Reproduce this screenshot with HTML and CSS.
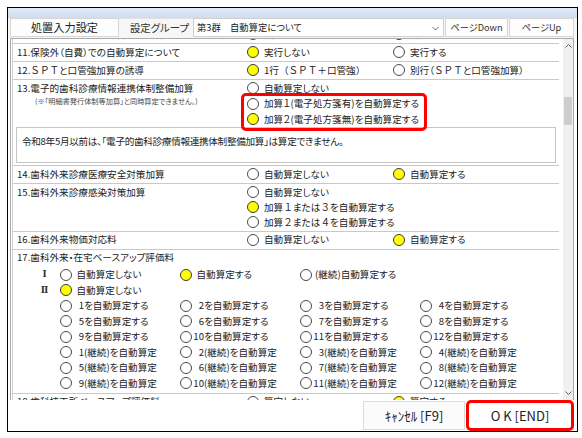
FILE: index.html
```html
<!DOCTYPE html>
<html lang="ja">
<head>
<meta charset="utf-8">
<title>処置入力設定</title>
<link rel="stylesheet" href="styles.css">
</head>
<body>
<div class="window">
  <div class="titlebar"></div>

  <div class="toolbar">
    <button class="tb-btn tb-main">処置入力設定</button>
    <div class="tb-label">設定グループ</div>
    <div class="combo">
      <span class="combo-text">第3群　自動算定について</span>
      <svg class="combo-arrow" width="7" height="5" viewBox="0 0 7 5"><path d="M0.5 1 L3.5 4 L6.5 1" fill="none" stroke="#6a6a6a" stroke-width="1"/></svg>
    </div>
    <button class="tb-btn tb-down">ページDown</button>
    <button class="tb-btn tb-up">ページUp</button>
  </div>

  <div class="panel">
    <div class="viewport">
      <div class="list">

        <div class="row">
          <div class="label">10.歯科疾患管理料の文書提供加算</div>
          <label class="opt"><span class="radio"></span>実行しない</label>
          <label class="opt"><span class="radio on"></span>実行する</label>
        </div>

        <div class="row">
          <div class="label">11.保険外（自費）での自動算定について</div>
          <label class="opt"><span class="radio on"></span>実行しない</label>
          <label class="opt"><span class="radio"></span>実行する</label>
        </div>

        <div class="row">
          <div class="label">12.<span class="fw">ＳＰＴ</span>と口管強加算の誘導</div>
          <label class="opt"><span class="radio on"></span><span class="fw">1行（ＳＰＴ＋口管強）</span></label>
          <label class="opt"><span class="radio"></span>別行（<span class="fw">ＳＰＴ</span>と口管強加算）</label>
        </div>

        <div class="row">
          <div class="label">13.電子的歯科診療情報連携体制整備加算
            <div class="sub">(※「明細書発行体制等加算」と同時算定できません。)</div>
          </div>
          <div class="stack">
            <label class="opt"><span class="radio"></span>自動算定しない</label>
            <div class="mark">
              <label class="opt"><span class="radio"></span>加算１(電子処方箋有)を自動算定する</label>
              <label class="opt"><span class="radio on"></span>加算２(電子処方箋無)を自動算定する</label>
            </div>
          </div>
          <div class="notice">令和8年5月以前は、「電子的歯科診療情報連携体制整備加算」は算定できません。</div>
        </div>

        <div class="row">
          <div class="label">14.歯科外来診療医療安全対策加算</div>
          <label class="opt"><span class="radio"></span>自動算定しない</label>
          <label class="opt"><span class="radio on"></span>自動算定する</label>
        </div>

        <div class="row">
          <div class="label">15.歯科外来診療感染対策加算</div>
          <div class="stack tight">
            <label class="opt"><span class="radio"></span>自動算定しない</label>
            <label class="opt"><span class="radio on"></span>加算<span class="fw">１</span>または<span class="fw">３</span>を自動算定する</label>
            <label class="opt"><span class="radio"></span>加算<span class="fw">２</span>または<span class="fw">４</span>を自動算定する</label>
          </div>
        </div>

        <div class="row">
          <div class="label">16.歯科外来物価対応料</div>
          <label class="opt"><span class="radio"></span>自動算定しない</label>
          <label class="opt"><span class="radio on"></span>自動算定する</label>
        </div>

        <div class="row base">
          <div class="label">17.歯科外来・在宅ベースアップ評価料</div>
          <div class="eval">
            <span class="roman">Ⅰ</span>
            <label class="opt"><span class="radio"></span>自動算定しない</label>
            <label class="opt"><span class="radio on"></span>自動算定する</label>
            <label class="opt k"><span class="radio"></span>(継続)自動算定する</label>
            <span></span>

            <span class="roman">Ⅱ</span>
            <label class="opt"><span class="radio on"></span>自動算定しない</label>
            <span></span><span></span><span></span>

            <label class="opt n c2"><span class="radio"></span><span class="num">1</span>を自動算定する</label>
            <label class="opt n"><span class="radio"></span><span class="num">2</span>を自動算定する</label>
            <label class="opt n"><span class="radio"></span><span class="num">3</span>を自動算定する</label>
            <label class="opt n"><span class="radio"></span><span class="num">4</span>を自動算定する</label>

            <label class="opt n c2"><span class="radio"></span><span class="num">5</span>を自動算定する</label>
            <label class="opt n"><span class="radio"></span><span class="num">6</span>を自動算定する</label>
            <label class="opt n"><span class="radio"></span><span class="num">7</span>を自動算定する</label>
            <label class="opt n"><span class="radio"></span><span class="num">8</span>を自動算定する</label>

            <label class="opt n c2"><span class="radio"></span><span class="num">9</span>を自動算定する</label>
            <label class="opt n"><span class="radio"></span><span class="num">10</span>を自動算定する</label>
            <label class="opt n"><span class="radio"></span><span class="num">11</span>を自動算定する</label>
            <label class="opt n"><span class="radio"></span><span class="num">12</span>を自動算定する</label>

            <label class="opt n c2"><span class="radio"></span><span class="num">1</span>(継続)を自動算定</label>
            <label class="opt n"><span class="radio"></span><span class="num">2</span>(継続)を自動算定</label>
            <label class="opt n"><span class="radio"></span><span class="num">3</span>(継続)を自動算定</label>
            <label class="opt n"><span class="radio"></span><span class="num">4</span>(継続)を自動算定</label>

            <label class="opt n c2"><span class="radio"></span><span class="num">5</span>(継続)を自動算定</label>
            <label class="opt n"><span class="radio"></span><span class="num">6</span>(継続)を自動算定</label>
            <label class="opt n"><span class="radio"></span><span class="num">7</span>(継続)を自動算定</label>
            <label class="opt n"><span class="radio"></span><span class="num">8</span>(継続)を自動算定</label>

            <label class="opt n c2"><span class="radio"></span><span class="num">9</span>(継続)を自動算定</label>
            <label class="opt n"><span class="radio"></span><span class="num">10</span>(継続)を自動算定</label>
            <label class="opt n"><span class="radio"></span><span class="num">11</span>(継続)を自動算定</label>
            <label class="opt n"><span class="radio"></span><span class="num">12</span>(継続)を自動算定</label>
          </div>
        </div>

        <div class="row">
          <div class="label">18.歯科技工所ベースアップ評価料</div>
          <label class="opt"><span class="radio"></span>算定しない</label>
          <label class="opt"><span class="radio on"></span>算定する</label>
        </div>

      </div>
    </div>

    <div class="scrollbar">
      <div class="sb-btn"><svg width="7" height="4" viewBox="0 0 7 4"><path d="M0.5 3.5 L3.5 0.5 L6.5 3.5" fill="none" stroke="#606060" stroke-width="1"/></svg></div>
      <div class="sb-track"><div class="sb-thumb"></div></div>
      <div class="sb-btn"><svg width="7" height="4" viewBox="0 0 7 4"><path d="M0.5 0.5 L3.5 3.5 L6.5 0.5" fill="none" stroke="#606060" stroke-width="1"/></svg></div>
    </div>
  </div>

  <div class="footer">
    <button class="ft-btn cancel">ｷｬﾝｾﾙ [F9]</button>
    <button class="ft-btn ok">O K [END]</button>
  </div>
</div>
</body>
</html>
```

FILE: styles.css
```css
* {
  box-sizing: border-box;
}

html,
body {
  margin: 0;
  background: #fff;
}

body {
  font-family: "Noto Sans CJK JP", "Noto Sans", sans-serif;
  font-size: 9.6px;
  color: #222;
  font-feature-settings: "palt";
}

button {
  font: inherit;
  color: inherit;
  padding: 0;
  cursor: default;
}

/* full-width letters and digits keep their full cell */
.fw {
  font-feature-settings: normal;
}

/* dialog frame */
.window {
  margin: 7px 0 0 7px;
  width: 571px;
  height: 425px;
  border: 1px solid #000;
  display: flex;
  flex-direction: column;
  background: #fff;
}

.titlebar {
  flex: none;
  height: 10px;
  background: linear-gradient(#e0e9f5, #d0ddef);
}

/* top toolbar */
.toolbar {
  flex: none;
  height: 20px;
  display: flex;
  align-items: flex-start;
  padding: 0 0 1px 2px;
  background: #f6f6f6;
}

.tb-btn {
  height: 19px;
  line-height: 17px;
  border: 1px solid #d6d6d6;
  background: #fdfdfd;
  white-space: nowrap;
  overflow: hidden;
}

.tb-main {
  width: 109px;
  font-size: 11.2px;
}

.tb-label {
  width: 74px;
  height: 19px;
  line-height: 18px;
  text-align: right;
  padding-right: 4px;
  font-size: 10.4px;
  color: #333;
  border-top: 1px solid #e2e2e2;
  white-space: nowrap;
}

.combo {
  width: 251px;
  height: 19px;
  line-height: 17px;
  border: 1px solid #cfcfcf;
  background: #fff;
  display: flex;
  align-items: center;
  padding: 0 4px 0 3px;
  font-size: 9.3px;
}

.combo-text {
  flex: 1;
  white-space: nowrap;
}

.combo-arrow {
  flex: none;
  margin-top: 1px;
}

.tb-down {
  width: 63px;
  margin-left: 1px;
  font-size: 9.2px;
  color: #333;
}

.tb-up {
  width: 65px;
  margin-left: 1px;
  font-size: 9.2px;
  color: #333;
}

/* scrolling settings panel */
.panel {
  flex: none;
  height: 362px;
  margin: 0 3px 0 2px;
  border: 1px solid #aaa;
  border-bottom: none;
  display: flex;
}

.viewport {
  flex: 1;
  overflow: hidden;
}

.list {
  margin: -13px 4px 0 1px;
  border-left: 1px solid #d2d2d2;
}

.row {
  display: grid;
  grid-template-columns: 234px 146px 1fr;
  padding: 0.5px 0 1px;
  border-bottom: 1px solid #c9c9c9;
  line-height: 15.5px;
}

.label {
  padding-left: 4px;
  white-space: nowrap;
}

.sub {
  font-size: 7.2px;
  line-height: 10px;
  padding-left: 18px;
  color: #444;
}

.opt {
  display: flex;
  align-items: center;
  white-space: nowrap;
}

.radio {
  flex: none;
  width: 12px;
  height: 12px;
  border: 1px solid #4a4a4a;
  border-radius: 50%;
  background: #fff;
  margin-right: 5px;
}

.radio.on {
  background: #ffff00;
  border-color: #3a3a3a;
}

.stack {
  grid-column: 2 / 4;
}

.stack.tight {
  line-height: 15px;
}

/* red highlight around the two 加算 choices */
.mark {
  position: relative;
  width: 174px;
}

.mark::after {
  content: "";
  position: absolute;
  inset: -3px -6px -4px -6px;
  border: 3px solid #f00;
  border-radius: 5px;
  z-index: 2;
}

.notice {
  grid-column: 1 / -1;
  margin: 0 3px 1px 3px;
  height: 36px;
  border: 1px solid #c6c6c6;
  padding: 6px 0 0 5px;
  line-height: 15px;
  letter-spacing: -0.3px;
  white-space: nowrap;
}

/* base-up evaluation grid */
.row.base {
  display: block;
  padding-bottom: 1.5px;
}

.eval {
  display: grid;
  grid-template-columns: 30px repeat(4, 120px);
  padding-left: 16.5px;
  margin-top: 1.5px;
}

.roman {
  text-align: center;
  font-family: "DejaVu Serif", "Liberation Serif", serif;
  font-size: 9px;
  font-weight: bold;
  color: #333;
}

.c2 {
  grid-column: 2;
}

.opt.k .radio {
  margin-right: 3.5px;
}

.opt.n .radio {
  margin-right: 1.5px;
}

.num {
  display: inline-block;
  width: 11px;
  text-align: right;
}

/* vertical scrollbar */
.scrollbar {
  flex: none;
  width: 10px;
  background: #f0f0f0;
  display: flex;
  flex-direction: column;
}

.sb-btn {
  flex: none;
  height: 14px;
  display: flex;
  align-items: center;
  justify-content: center;
}

.sb-track {
  flex: 1;
}

.sb-thumb {
  margin: 44px 1px 0;
  height: 28px;
  background: #cdcdcd;
}

/* bottom buttons */
.footer {
  flex: 1;
  display: flex;
  justify-content: flex-end;
  align-items: flex-start;
  padding-right: 3px;
}

.ft-btn {
  font-size: 13px;
  line-height: 18px;
  color: #222;
  background: #fff;
}

.cancel {
  width: 102px;
  height: 29px;
  margin: 1px 1px 0 0;
  border: 1px solid #dcdcdc;
  background: #fbfbfb;
}

.ok {
  width: 108px;
  height: 31px;
  border: 3px solid #f00;
  border-radius: 5px;
}
```
